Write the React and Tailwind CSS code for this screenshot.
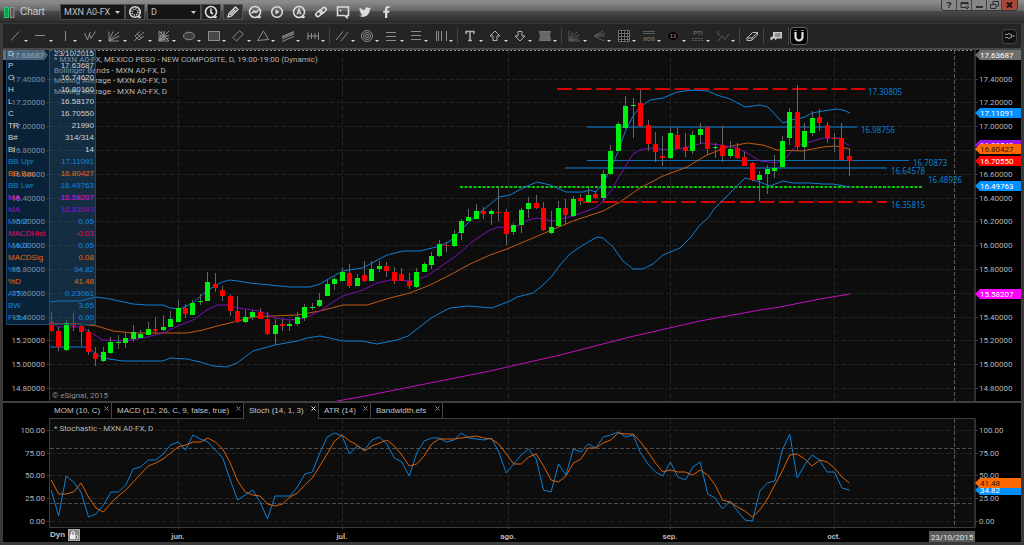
import React, { useState } from 'react';

const BLUE = '#0c7fd6';
const STEP = 7.46;
const barX = (i) => 51.2 + STEP * i;

// [high, bodyTop, bodyBottom, low, up]
const CANDLES = [
  [312, 322, 331, 332, 0], [327, 331, 347, 351, 0], [320, 323, 350, 351, 1], [313, 323, 326, 331, 0],
  [324, 326, 332, 346, 0], [329, 332, 352, 355, 0], [347, 353, 359, 366, 0], [347, 352, 361, 362, 1],
  [337, 342, 353, 354, 1], [335, 342, 343, 349, 1], [333, 338, 343, 348, 1], [325, 332, 339, 342, 1],
  [330, 334, 338, 338, 1], [322, 329, 335, 335, 1], [317, 329, 331, 334, 0], [315, 327, 330, 331, 1],
  [311, 319, 327, 327, 1], [300, 308, 322, 322, 1], [304, 308, 314, 318, 0], [300, 303, 315, 315, 1],
  [294, 301, 302, 305, 1], [272, 282, 301, 301, 1], [273, 284, 288, 292, 0], [286, 290, 296, 301, 0],
  [294, 296, 311, 316, 0], [296, 311, 322, 323, 0], [310, 317, 322, 323, 1], [310, 312, 317, 320, 1],
  [308, 312, 319, 319, 0], [312, 319, 334, 335, 0], [319, 325, 334, 345, 1], [319, 324, 326, 331, 0],
  [321, 324, 326, 331, 1], [312, 317, 324, 326, 1], [304, 307, 318, 321, 1], [303, 307, 308, 310, 1],
  [293, 300, 306, 307, 1], [279, 284, 296, 296, 1], [277, 279, 284, 290, 1], [267, 272, 281, 281, 1],
  [264, 273, 286, 288, 0], [274, 278, 286, 286, 1], [261, 275, 281, 282, 0], [261, 269, 281, 281, 1],
  [261, 266, 269, 272, 1], [262, 266, 271, 277, 0], [267, 272, 281, 284, 0], [268, 274, 281, 281, 0],
  [273, 281, 286, 289, 0], [268, 272, 287, 288, 1], [262, 264, 272, 272, 1], [252, 256, 265, 269, 1],
  [240, 244, 256, 257, 1], [242, 245, 246, 252, 0], [230, 234, 246, 247, 1], [219, 221, 233, 240, 1],
  [209, 217, 221, 221, 1], [204, 211, 219, 219, 1], [207, 211, 214, 219, 0], [209, 211, 214, 225, 1],
  [187, 212, 213, 221, 0], [209, 212, 234, 245, 0], [223, 225, 232, 235, 1], [208, 210, 225, 233, 1],
  [197, 203, 209, 218, 1], [195, 203, 208, 209, 0], [202, 208, 230, 231, 0], [211, 227, 233, 234, 1],
  [201, 208, 226, 227, 1], [199, 208, 215, 224, 0], [196, 199, 216, 217, 1], [194, 198, 201, 205, 0],
  [188, 195, 202, 203, 1], [191, 194, 198, 199, 0], [170, 174, 198, 201, 1], [145, 151, 174, 175, 1],
  [122, 124, 151, 151, 1], [96, 106, 128, 129, 1], [98, 105, 106, 138, 1], [90, 103, 126, 127, 0],
  [120, 125, 144, 151, 0], [132, 144, 152, 162, 0], [136, 156, 158, 166, 0], [127, 133, 158, 159, 1],
  [127, 135, 149, 149, 0], [133, 147, 151, 157, 0], [131, 135, 151, 154, 1], [123, 129, 135, 144, 1],
  [126, 127, 149, 155, 0], [143, 147, 148, 158, 1], [126, 145, 156, 162, 0], [141, 149, 156, 158, 1],
  [143, 148, 158, 159, 0], [152, 157, 166, 166, 0], [162, 163, 180, 181, 0], [171, 175, 180, 201, 1],
  [165, 169, 174, 194, 1], [155, 168, 171, 178, 1], [136, 141, 167, 168, 1], [108, 112, 138, 145, 1],
  [85, 112, 147, 150, 0], [123, 131, 147, 161, 1], [111, 118, 133, 136, 1], [109, 117, 123, 131, 0],
  [122, 125, 138, 143, 0], [133, 138, 139, 152, 0], [123, 138, 160, 160, 0], [149, 156, 161, 176, 0],
];

const BB_UPPER = '50,302 58,301 80,301 96,297 110,299 133,304 147,305 163,305 170,308 180,309 193,303 203,294 213,287 222,282 230,280 238,281 250,283 270,285 290,287 310,287 320,284 330,278 343,271 362,268 370,264 387,255 403,251 420,251 440,246 450,241 460,231 469,222 483,210 499,197 510,195 523,188 537,182 550,185 566,192 583,192 590,190 596,192 603,183 610,170 618,152 625,132 633,116 640,107 650,100 663,98 677,92 693,90 708,91 717,95 730,99 745,107 760,105 768,107 783,123 791,120 797,119 805,117 812,113 823,111 837,109 843,110 850,113';
const BB_LOWER = '50,347 88,347 95,353 103,358 123,361 163,361 170,358 187,359 200,362 213,366 227,367 237,363 253,351 275,345 297,341 307,338 320,336 343,341 362,341 377,344 397,340 408,336 417,329 430,319 440,313 450,308 468,306 492,308 510,301 517,297 533,293 543,285 552,276 560,265 570,254 583,245 597,237 603,238 613,247 623,261 633,269 643,269 653,264 663,255 680,248 690,238 700,225 708,218 715,208 730,193 745,178 757,181 770,186 783,181 793,183 810,183 823,184 833,184 850,187';
const BB_BASIS = '50,324 78,324 97,326 113,331 133,333 170,333 187,333 203,330 217,326 238,321 253,317 273,316 297,315 320,311 343,305 367,305 390,298 410,293 430,285 450,275 470,264 490,255 507,249 540,235 573,221 603,211 620,202 640,188 663,176 687,167 707,155 727,147 747,143 763,145 777,150 803,151 823,147 835,146 850,149';
const MA_FAST = '50,322 58,327 80,327 88,331 103,340 125,341 147,337 163,333 180,325 193,320 207,310 217,305 227,305 238,308 260,311 275,318 290,320 305,318 320,311 333,302 343,296 363,290 377,283 390,280 413,281 427,276 440,267 457,255 473,241 490,230 499,227 513,228 528,220 537,218 553,221 573,216 597,207 603,201 611,191 620,175 633,154 640,150 650,148 670,150 683,148 703,143 720,145 737,148 747,153 760,161 777,163 787,157 793,149 797,146 813,141 823,138 840,138 845,143 850,146';
const MA_SLOW = '337,401 360,397 390,391 430,383 490,371 560,355 630,337 700,321 760,310 780,307 820,299 850,294';

const STOCH_K = [
  490, 516, 476, 482, 492, 517, 514, 505, 492, 492, 485, 469, 467, 460, 460, 454, 445, 442, 450, 435,
  439, 442, 450, 458, 480, 500, 495, 490, 502, 519, 496, 496, 496, 487, 474, 472, 453, 437, 433, 436,
  454, 446, 450, 440, 437, 444, 458, 462, 476, 453, 441, 438, 438, 442, 440, 433, 438, 439, 440, 438,
  452, 473, 464, 455, 449, 459, 490, 492, 464, 475, 449, 452, 444, 448, 437, 435, 432, 437, 435, 453,
  464, 472, 476, 462, 477, 480, 467, 462, 494, 498, 509, 501, 511, 520, 521, 491, 483, 481, 450, 434,
  478, 465, 455, 460, 472, 472, 488, 490,
];
const STOCH_D = [
  480, 494, 494, 492, 483, 497, 508, 512, 503, 496, 490, 482, 474, 466, 463, 459, 453, 447, 445, 442,
  442, 438, 442, 449, 463, 481, 492, 495, 496, 504, 506, 504, 497, 493, 485, 478, 466, 454, 441, 435,
  441, 445, 451, 446, 443, 440, 446, 455, 466, 464, 456, 444, 439, 439, 439, 438, 437, 436, 438, 439,
  444, 454, 464, 464, 457, 454, 466, 480, 482, 476, 463, 459, 448, 448, 443, 440, 433, 434, 434, 442,
  452, 463, 472, 470, 472, 472, 475, 470, 475, 485, 500, 502, 507, 511, 517, 510, 499, 485, 471, 455,
  454, 459, 466, 460, 462, 468, 477, 483,
];
const toPoints = (ys) => ys.map((y, i) => `${barX(i)},${y}`).join(' ');

const MONTHS = [[178, 'jun.'], [342, 'jul.'], [508, 'ago.'], [670, 'sep.'], [834, 'oct.']];

const PRICES = Array.from({ length: 14 }, (_, i) => ({
  y: Math.round(78.5 + i * 23.8),
  label: (17.4 - i * 0.2).toFixed(5),
}));

const STOCH_TICKS = [[430, '100.00'], [453, '75.00'], [475, '50.00'], [498, '25.00'], [521, '0.00']];

const READOUT = [
  ['D', '23/10/2015', 'text-[#d0d0d0]'],
  ['P', '17.63687', 'text-[#d0d0d0]'],
  ['O', '16.74620', 'text-[#d0d0d0]'],
  ['H', '16.80160', 'text-[#d0d0d0]'],
  ['L', '16.58170', 'text-[#d0d0d0]'],
  ['C', '16.70550', 'text-[#d0d0d0]'],
  ['TR', '21990', 'text-[#d0d0d0]'],
  ['B#', '314/314', 'text-[#d0d0d0]'],
  ['BI', '14', 'text-[#d0d0d0]'],
  ['BB Upr', '17.11091', 'text-[#0c84e0]'],
  ['BB Bas', '16.80427', 'text-[#e8680c]'],
  ['BB Lwr', '16.49763', 'text-[#0c84e0]'],
  ['MA', '15.58207', 'text-[#e010e0]'],
  ['MA', '16.83543', 'text-[#8a10d8]'],
  ['MOM', '0.05', 'text-[#0c84e0]'],
  ['MACDHist', '-0.03', 'text-[#e0106c]'],
  ['MACD', '0.05', 'text-[#0c84e0]'],
  ['MACDSig', '0.08', 'text-[#e8680c]'],
  ['%K', '34.82', 'text-[#0c84e0]'],
  ['%D', '41.48', 'text-[#e8680c]'],
  ['ATR', '0.23061', 'text-[#0c84e0]'],
  ['BW', '3.65', 'text-[#0c84e0]'],
  ['Floor', '0.00', 'text-[#0c84e0]'],
];

const TABS = [
  ['MOM (10, C)', 'w-[63px]'],
  ['MACD (12, 26, C, 9, false, true)', 'w-[132px]'],
  ['Stoch (14, 1, 3)', 'w-[75px]'],
  ['ATR (14)', 'w-[52px]'],
  ['Bandwidth.efs', 'w-[72px]'],
];

const ICONS = {
  Line: <path d="M2 10.5L10 1.5" />,
  Horizontal: <path d="M1 5.5H11" />,
  Vertical: <path d="M6.5 1V11" />,
  Elliott: <path d="M.5 3L3.5 10L5.5 4L7 8.500L11.500 1.500M5.500 4L6.500 2" />,
  Fan: <path d="M1 1.500V11H11M1 11L5 1.500M1 11L11 2M1 11L11.500 6" />,
  Pitchfork: <path d="M1 11L11 2M2 6L7 1.500M6 10L11 6M2 6L6 10M4 3.500L8 8" />,
  Gann: <path d="M1 11L11 1M1 1L11 11M1 1.500V11H11M1 11L4 1M1 11L7 1M1 11L11 5M1 11L11 8M3 6H9M6 2V10" />,
  Ellipse: <ellipse cx="6" cy="6" rx="5.500" ry="3.800" fill="#3c3c3c" />,
  Rectangle: <rect x=".5" y="1.500" width="11" height="9" fill="#484848" />,
  Parallelogram: <path d="M.8 7.500L7.500.8L11.200 4L4.500 11Z" />,
  Triangle: <path d="M6.500 1L11.500 9.500L.5 10.500Z" />,
  Channel: <path d="M0 6.500L12 1.500M0 9L12 4M0 11.500L12 6.500M0 7.500L12 2.500" />,
  Cycles: <path d="M0 6H12M1 2.500V10M4.500 3V9M8 3V9M11.500 2.500V10" />,
  Parallels: <path d="M0 10L7 1.500M5 11L12 2" />,
  Circles: (
    <>
      <circle cx="6" cy="6" r="5.500" />
      <circle cx="6" cy="6" r="3.500" />
      <circle cx="6" cy="6" r="1.500" />
    </>
  ),
  Retracement: <path d="M1 2.500H11M1 6.500H11M1 10.500H11" />,
  Extension: <path d="M1 1.500H11M1 5.500H11M1 9.500H11" />,
  TimeZones: <path d="M1.500 1V11M3.500 1V11M6.500 1V11M11.500 1V11" />,
  Text: <path d="M2 4V1.500H10V4M6 1.500V10.500M4 10.500H8" strokeWidth="1.500" stroke="#b0b0b0" />,
  ArrowUp: <path d="M6 1L11 6H8V10.500H4V6H1Z" stroke="#b0b0b0" />,
  ArrowDown: <path d="M6 11L11 6H8V1.500H4V6H1Z" stroke="#b0b0b0" />,
  Flag: <path d="M.5 1.500H11.500L10.500 4.500L11.500 10.500H.5L1.500 6.500Z" fill="#686868" stroke="#747474" />,
  GannAngles: <path d="M1 1V11H12M1 11L5 2M1 11L9 2M1 11L11 5M1 11L11 8.500" stroke="#5c5c5c" />,
  Rays: <path d="M1 6H12M1 6L10 1M1 6L11 11M1 6L12 3.500" stroke="#5c5c5c" />,
  Grid: <path d="M.5.5H11.500V11.500H.5ZM3.500.5V11.500M6.500.5V11.500M9.500.5V11.500M.5 3.500H11.500M.5 6.500H11.500M.5 9.500H11.500" stroke="#707070" fill="#080808" />,
  Mob: (
    <>
      <path d="M0 1.500H12M0 3.500H12" stroke="#5c5c5c" />
      <text x="6" y="11" textAnchor="middle" fontSize="5" fontWeight="bold" fill="#6a6a6a" stroke="none">MOB</text>
    </>
  ),
  Ellipse13: (
    <>
      <ellipse cx="6" cy="6" rx="5.800" ry="4.500" fill="#000" stroke="#333" />
      <text x="6" y="8" textAnchor="middle" fontSize="6" fontWeight="bold" fill="#777" stroke="none">13</text>
    </>
  ),
  Pti: (
    <>
      <text x="6" y="5" textAnchor="middle" fontSize="6" fontWeight="bold" fill="#6a6a6a" stroke="none">PTI</text>
      <path d="M0 8.500H12M0 10.500H12" stroke="#5c5c5c" strokeDasharray="2 1" />
    </>
  ),
  Swing: <path d="M1 1V5H3M1 11L5 6L8 9.500L12 4" stroke="#5c5c5c" />,
};

const TOOL_GROUPS = [
  { className: 'w-[326px] pr-1', tools: ['Line', 'Horizontal', 'Vertical', 'Elliott', 'Fan', 'Pitchfork', 'Gann', 'Ellipse', 'Rectangle', 'Parallelogram', 'Triangle', 'Channel', 'Cycles'] },
  { className: 'w-[128px] pr-1 border-l border-[#444]', tools: ['Parallels', 'Circles', 'Retracement', 'Extension', 'TimeZones'] },
  { className: 'w-[104px] pr-1 border-l border-[#444]', tools: ['Text', 'ArrowUp', 'ArrowDown', 'Flag'] },
  { className: 'w-[178px] pr-1 border-l border-[#444]', tools: ['GannAngles', 'Rays', 'Grid', 'Mob', 'Ellipse13', 'Pti', 'Swing'] },
];

function ToolButton({ name }) {
  return (
    <button aria-label={name} className="relative flex-1 h-4 flex items-center justify-center">
      <svg viewBox="0 0 12 12" className="w-3 h-3" fill="none" stroke="#8c8c8c" strokeWidth="1">
        {ICONS[name]}
      </svg>
      <svg viewBox="0 0 4 2" className="absolute right-0 bottom-[2px] w-1 h-[2px]" fill="#ddd">
        <path d="M0 0H4L2 2Z" />
      </svg>
    </button>
  );
}

function Combo({ label, value, className }) {
  return (
    <label className={`relative h-4 bg-[#151515] border border-[#4c4c4c] ${className}`}>
      <select aria-label={label} defaultValue={value} className="appearance-none w-full h-full pl-[3px] font-[Roboto,sans-serif] text-[9px] leading-[14px] text-[#c0c0c0] bg-transparent block">
        <option>{value}</option>
      </select>
      <svg viewBox="0 0 5 3" className="absolute right-1 top-[6px] w-[5px] h-[3px] pointer-events-none" fill="#ccc">
        <path d="M0 0H5L2.500 3Z" />
      </svg>
    </label>
  );
}

function HeaderIcon({ label, className = '', children }) {
  return (
    <button aria-label={label} className={`h-4 flex items-center justify-center ${className}`}>
      <svg viewBox="0 0 14 14" className="w-[14px] h-[14px]" fill="none" stroke="#dcdcdc" strokeWidth="1.600">
        {children}
      </svg>
    </button>
  );
}

const Caret = () => <path d="M9.500 11.500H13.500L11.500 13.500Z" fill="#fff" stroke="none" />;

function TitleBar() {
  return (
    <header className="flex items-start justify-between h-6 pl-1 pr-[6px] bg-[linear-gradient(#8a8a8a,#8a8a8a_8%,#626262_50%,#4a4a4a_50%,#2c2c2c_95%)] border-b border-[#383838]">
      <div className="flex items-center pt-1">
        <svg viewBox="0 0 11 11" className="w-[11px] h-[11px]">
          <rect x=".5" y=".5" width="4" height="10" fill="#0ba048" stroke="#2fc070" />
          <rect x="6.500" y=".5" width="3.500" height="10" fill="#555" stroke="#8d8d8d" />
        </svg>
        <h1 className="ml-[5px] w-10 text-[10px] leading-4 text-[#d0d0d0]">Chart</h1>
        <Combo label="Symbol" value="MXN A0-FX" className="w-[65px]" />
        <HeaderIcon label="Symbol settings" className="w-5 bg-[#202020] border border-[#4c4c4c]">
          <circle cx="7" cy="7" r="5.300" />
          <circle cx="7" cy="7" r="3" strokeDasharray="1.200 1.150" strokeWidth="1.500" />
          <Caret />
        </HeaderIcon>
        <Combo label="Interval" value="D" className="w-[54px] ml-[2px]" />
        <HeaderIcon label="Time template" className="w-5 bg-[#202020] border border-[#4c4c4c]">
          <circle cx="7" cy="7" r="5.500" />
          <path d="M7 3.500V7.500L9 9" />
          <Caret />
        </HeaderIcon>
        <HeaderIcon label="Draw" className="w-5 ml-[2px] bg-[#303030] border border-[#555]">
          <path d="M2 12L3 8.500L9.500 2L12 4.500L5.500 11ZM4 10L9.500 4.500" strokeWidth="1.300" />
        </HeaderIcon>
        <HeaderIcon label="Studies" className="w-[22px] ml-px">
          <circle cx="7" cy="7" r="5.500" />
          <path d="M3.500 8.500L6 6L8 7.500L10.500 5" />
          <Caret />
        </HeaderIcon>
        <HeaderIcon label="Playback" className="w-[22px]">
          <circle cx="7" cy="7" r="5.300" />
          <path d="M5.500 4.500V9.500L9.500 7Z" fill="#dcdcdc" stroke="none" />
        </HeaderIcon>
        <HeaderIcon label="Alerts" className="w-[22px]">
          <circle cx="7" cy="7" r="5.500" />
          <path d="M5 9.500L7 4L9 9.500M5.700 8H8.300" strokeWidth="1.200" />
          <Caret />
        </HeaderIcon>
        <HeaderIcon label="Link" className="w-[22px]">
          <rect x="1.500" y="6.500" width="7" height="4" rx="2" transform="rotate(-42 5 8.500)" />
          <rect x="5.500" y="3.500" width="7" height="4" rx="2" transform="rotate(-42 9 5.500)" />
        </HeaderIcon>
        <HeaderIcon label="Comment" className="w-[22px]">
          <path d="M1.500 2H12.500V10.500H11V12.500L8.500 10.500H1.500Z" />
          <path d="M4.500 4.500V6.500" />
        </HeaderIcon>
        <HeaderIcon label="Twitter" className="w-[22px]">
          <path stroke="none" fill="#dcdcdc" d="M13 3.300c-.4.200-.9.300-1.400.4.500-.3.900-.8 1.100-1.300-.5.300-1 .5-1.600.6A2.500 2.500 0 0 0 6.900 5.200C4.800 5.100 3 4.100 1.800 2.600c-.7 1.200-.3 2.600.8 3.300-.4 0-.8-.1-1.100-.3 0 1.200.8 2.200 2 2.400-.4.100-.7.100-1.100 0 .3 1 1.200 1.700 2.300 1.700A5 5 0 0 1 1 10.800c4.800 3 10.900-.4 10.800-6.200.5-.4.900-.8 1.200-1.300Z" />
        </HeaderIcon>
        <HeaderIcon label="Facebook" className="w-[22px]">
          <path stroke="none" fill="#dcdcdc" d="M5 13V7.800H3.200V5.700H5V4.200C5 2.300 6.100 1 7.900 1h1.600v2.100H8.300c-.7 0-1 .3-1 1v1.600h2.200l-.3 2.100H7.300V13Z" />
        </HeaderIcon>
      </div>
      <div className="flex h-[11px] border border-t-0 border-[#383838] divide-x divide-[#444] rounded-b-sm overflow-hidden">
        <button aria-label="Help" className="w-[15px] bg-[#858585] text-[9px] leading-[10px] font-bold text-[#222]">?</button>
        <button aria-label="Dock" className="w-[15px] bg-[#858585] flex items-center justify-center">
          <svg viewBox="0 0 9 8" className="w-[9px] h-2" fill="none" stroke="#2c2c2c"><path d="M5 6.500H1V1.500H8V4M1 2.500H8M5 6H9L7 8Z" /></svg>
        </button>
        <button aria-label="Minimize" className="w-[15px] bg-[#858585] flex items-center justify-center">
          <svg viewBox="0 0 9 8" className="w-[9px] h-2" stroke="#2c2c2c" strokeWidth="2"><path d="M1 6H8" /></svg>
        </button>
        <button aria-label="Restore" className="w-[15px] bg-[#858585] flex items-center justify-center">
          <svg viewBox="0 0 9 8" className="w-[9px] h-2" fill="none" stroke="#2c2c2c"><path d="M3 3V.5H8.500V5H6.500M.5 3.500H6V7.500H.5Z" /></svg>
        </button>
        <button aria-label="Close" className="w-[15px] bg-[#a8483c] flex items-center justify-center">
          <svg viewBox="0 0 9 8" className="w-[9px] h-2" stroke="#2a1210" strokeWidth="2"><path d="M2 1.500L7 6.500M7 1.500L2 6.500" /></svg>
        </button>
      </div>
    </header>
  );
}

function Toolbar() {
  return (
    <div className="flex items-center h-6 pr-1 bg-[#242424]">
      {TOOL_GROUPS.map((g, i) => (
        <div key={i} className={`flex shrink-0 items-center ${g.className}`}>
          {g.tools.map((t) => <ToolButton key={t} name={t} />)}
        </div>
      ))}
      <button aria-label="Eraser" className="w-6 h-4 flex items-center justify-center border-l border-[#444]">
        <svg viewBox="0 0 12 12" className="w-3 h-3" fill="none" stroke="#bbb"><path d="M1 8L6.500 2.500H11.500L6 8ZM1 8V10.500H5.500L11.500 5V2.500M6 8V10" /></svg>
      </button>
      <button aria-label="Note" className="w-[25px] h-4 flex items-center justify-center border-l border-[#444]">
        <svg viewBox="0 0 12 12" className="w-3 h-3" fill="#c8c8c8"><path d="M3 2H12V8.500H7L5 10.500V8.500H3.500L1 10.500L0 8L3 6Z" /><path d="M5 4H10.500M5 6H10.500" stroke="#555" /></svg>
      </button>
      <div className="flex border-l border-[#444] pl-px">
        <button aria-label="Magnet" className="w-[18px] h-[18px] bg-black border border-[#666] rounded-sm flex items-center justify-center">
          <svg viewBox="0 0 12 12" className="w-3 h-3" fill="none" stroke="#e0e0e0" strokeWidth="2.200">
            <path d="M2.500 2V7A3.500 3.500 0 0 0 9.500 7V2" />
            <path d="M2.500 0V1M9.500 0V1" stroke="#aaa" />
          </svg>
        </button>
      </div>
      <button aria-label="Pin" className="ml-auto w-[15px] h-[15px] bg-[#101010] border border-[#444] rounded-sm flex items-center justify-center">
        <svg viewBox="0 0 10 6" className="w-[10px] h-[6px]" fill="none" stroke="#999"><path d="M0 1.500H3M0 4.500H3M3 .5L6.500 1.500V4.500L3 5.500M6.500 3H10" /></svg>
      </button>
    </div>
  );
}

function Tag({ y, color, textColor = '#fff', label }) {
  return (
    <g>
      <path d={`M975 ${y}L980 ${y - 5}H1021V${y + 5}H980Z`} fill={color} />
      <text x="980" y={y + 3} fill={textColor}>{label}</text>
    </g>
  );
}

function Level({ y, x1, x2, labelX, labelY, label, ...stroke }) {
  return (
    <g>
      <line x1={x1} x2={x2} y1={y} y2={y} {...stroke} />
      <text x={labelX} y={labelY} fill={BLUE} className="font-['Noto_Sans',sans-serif]">{label}</text>
    </g>
  );
}

function PriceChart() {
  return (
    <svg viewBox="3 50 1018 351" className="block w-full h-auto font-[Roboto,sans-serif] text-[8px]" fill="none" role="img" aria-label="Price chart">
      <rect x="3" y="50" width="1018" height="351" fill="#000" />
      <rect x="50" y="50" width="925" height="351" fill="#0d0d0d" />
      <g stroke="#232323" strokeDasharray="5 2" shapeRendering="crispEdges">
        {PRICES.map((p) => <line key={p.label} x1="50" x2="975" y1={p.y + 0.5} y2={p.y + 0.5} />)}
        {MONTHS.map(([x]) => <line key={x} x1={x + 0.5} x2={x + 0.5} y1="50" y2="401" />)}
      </g>
      <line x1="50" x2="975" y1="50.5" y2="50.5" stroke="#888" strokeDasharray="2 2" />
      <line x1="954.5" x2="954.5" y1="50" y2="401" stroke="#585858" strokeDasharray="4 2" />
      <g stroke="#3c3c3c" shapeRendering="crispEdges">
        <line x1="49.5" x2="49.5" y1="50" y2="401" />
        <line x1="975" x2="975" y1="50" y2="401" strokeWidth="2" stroke="#303030" />
        {PRICES.map((p) => <path key={p.label} d={`M47 ${p.y + 0.5}h3M975 ${p.y + 0.5}h3`} />)}
      </g>
      <g fill="#b4b4b4">
        {PRICES.map((p) => (
          <g key={p.label}>
            <text x="45" y={p.y + 3} textAnchor="end">{p.label}</text>
            <text x="979" y={p.y + 3}>{p.label}</text>
          </g>
        ))}
        <text x="54" y="62">* MXN A0-FX, MEXICO PESO - NEW COMPOSITE, D, 19:00-19:00 (Dynamic)</text>
        <text x="54" y="73">Bollinger Bands - MXN A0-FX, D</text>
        <text x="54" y="83">Moving Average - MXN A0-FX, D</text>
        <text x="54" y="94">Moving Average - MXN A0-FX, D</text>
        <text x="52" y="398" fill="#8c8c8c">© eSignal, 2015</text>
      </g>

      <Level y={127} x1={587} x2={857} labelX={861} labelY={133} label="16.98756" stroke="#0e5f9f" strokeWidth="1.500" />
      <Level y={160.500} x1={587} x2={909} labelX={913} labelY={166} label="16.70873" stroke="#0e6db8" />
      <Level y={168} x1={565} x2={887} labelX={891} labelY={174} label="16.64578" stroke="#0e5f9f" strokeWidth="1.500" />
      <Level y={187} x1={460} x2={922} labelX={928} labelY={183} label="16.48926" stroke="#06c406" strokeWidth="2" strokeDasharray="3 1.500" />
      <Level y={89} x1={557} x2={865} labelX={868} labelY={95} label="17.30805" stroke="#d80000" strokeWidth="2" strokeDasharray="15 4.600" />
      <Level y={202} x1={583} x2={887} labelX={891} labelY={208} label="16.35815" stroke="#d80000" strokeWidth="2" strokeDasharray="15 4.600" />

      <polyline points={BB_UPPER} stroke={BLUE} />
      <polyline points={BB_LOWER} stroke={BLUE} />
      <polyline points={BB_BASIS} stroke="#c45a10" />
      <polyline points={MA_FAST} stroke="#7a10b8" />
      <polyline points={MA_SLOW} stroke="#c010c0" />
      <g shapeRendering="crispEdges">
        {CANDLES.map(([hi, top, bottom, lo, up], i) => {
          const x = Math.round(barX(i) - 0.5);
          const left = Math.max(x - 2, 50);
          return (
            <g key={i}>
              <line x1={x + 0.5} x2={x + 0.5} y1={hi} y2={lo} stroke="#666" />
              <rect x={left} y={top} width={x + 3 - left} height={bottom - top} fill={up ? '#00f010' : '#f80000'} />
            </g>
          );
        })}
      </g>

      <Tag y={55} color="#6e6e6e" label="17.63687" />
      <path d="M3 50H44L48 55L44 60H3Z" fill="#6e6e6e" />
      <text x="44" y="58" textAnchor="end" fill="#ddd">17.63687</text>
      <Tag y={113} color="#0090ff" label="17.11091" />
      <Tag y={145} color="#9a10e8" label="16.83543" />
      <Tag y={149} color="#ff6a00" textColor="#2a1400" label="16.80427" />
      <Tag y={161} color="#ff0000" label="16.70550" />
      <Tag y={186} color="#0090ff" label="16.49763" />
      <Tag y={294} color="#ff00ff" label="15.58207" />
    </svg>
  );
}

function Readout() {
  return (
    <table className="absolute left-[3px] -top-[3px] w-[90px] border-collapse border border-[#174a6c] bg-[#1a548a]/40 text-[8px]">
      <tbody>
        {READOUT.map(([name, value, color], i) => (
          <tr key={i} className={`h-3 leading-3 ${color}`}>
            <th scope="row" className="w-[43px] p-0 pl-px text-left font-normal border-r border-[#2a4a68]">{name}</th>
            <td className="p-0 pr-px text-right bg-[#ffffff]/2">{value}</td>
          </tr>
        ))}
      </tbody>
    </table>
  );
}

function StudyTabs() {
  const [active, setActive] = useState(2);
  return (
    <div className="flex h-4 pl-[46px] bg-black">
      {TABS.map(([name, width], i) => (
        <div
          key={name}
          className={`flex shrink-0 items-start justify-between pl-[5px] pr-[2px] border-r border-[#444] ${width} ${active === i ? 'bg-[#0d0d0d]' : 'border-b'}`}
        >
          <button onClick={() => setActive(i)} className="text-[8px] leading-4 whitespace-nowrap text-[#c4c4c4]">{name}</button>
          <button aria-label={`Close ${name}`} className="pt-[3px]">
            <svg viewBox="0 0 5 5" className="w-[5px] h-[5px]" stroke={active === i ? '#ddd' : '#888'}><path d="M.5.5L4.500 4.500M4.500.5L.5 4.500" /></svg>
          </button>
        </div>
      ))}
      <div className="flex-1 border-b border-[#3c3c3c] mr-[46px]" />
    </div>
  );
}

function StochChart() {
  return (
    <div className="relative">
      <svg viewBox="3 419 1018 123" className="block w-full h-auto font-[Roboto,sans-serif] text-[8px]" fill="none" role="img" aria-label="Stochastic chart">
        <rect x="3" y="419" width="1018" height="123" fill="#000" />
        <rect x="50" y="419" width="925" height="108" fill="#0d0d0d" />
        <g stroke="#232323" strokeDasharray="5 2" shapeRendering="crispEdges">
          {STOCH_TICKS.map(([y]) => <line key={y} x1="50" x2="975" y1={y + 0.5} y2={y + 0.5} />)}
          {MONTHS.map(([x]) => <line key={x} x1={x + 0.5} x2={x + 0.5} y1="419" y2="527" />)}
        </g>
        <path d="M50 448.500H975M50 503.500H975" stroke="#4c4c4c" strokeDasharray="4 2" />
        <line x1="954.5" x2="954.5" y1="419" y2="527" stroke="#585858" strokeDasharray="4 2" />
        <g stroke="#3c3c3c" shapeRendering="crispEdges">
          <path d="M49.500 419V527.500H975" />
          <line x1="975" x2="975" y1="419" y2="528" strokeWidth="2" stroke="#303030" />
          {STOCH_TICKS.map(([y]) => <path key={y} d={`M47 ${y + 0.5}h3M975 ${y + 0.5}h3`} />)}
          {MONTHS.map(([x]) => <path key={x} d={`M${x + 0.5} 527v2`} />)}
        </g>
        <g fill="#b4b4b4">
          {STOCH_TICKS.map(([y, label]) => (
            <g key={y}>
              <text x="45" y={y + 3} textAnchor="end">{label}</text>
              <text x="979" y={y + 3}>{label}</text>
            </g>
          ))}
          <text x="54" y="431">* Stochastic - MXN A0-FX, D</text>
          {MONTHS.map(([x, label]) => <text key={x} x={x} y="539" textAnchor="middle" fontWeight="bold">{label}</text>)}
        </g>
        <svg x="50" y="419" width="925" height="108" viewBox="50 419 925 108">
          <polyline points={toPoints(STOCH_K)} stroke={BLUE} />
          <polyline points={toPoints(STOCH_D)} stroke="#d8620c" />
        </svg>
        <Tag y={490} color="#0090ff" label="34.82" />
        <Tag y={483} color="#ff6a00" textColor="#2a1400" label="41.48" />
        <rect x="929" y="531" width="46" height="11" fill="#5a5a5a" />
        <text x="952" y="540" textAnchor="middle" fill="#e4e4e4">23/10/2015</text>
      </svg>
      <div className="absolute left-[47px] bottom-px flex items-center gap-[3px]">
        <span className="text-[8px] leading-3 font-bold text-[#c4c4c4]">Dyn</span>
        <button aria-label="Lock time axis" className="w-3 h-3 bg-[#8a8a8a] border border-[#aaa] flex items-center justify-center">
          <svg viewBox="0 0 10 10" className="w-[10px] h-[10px]" fill="none" stroke="#eee">
            <path d="M2.500 5V3A1.500 1.500 0 0 1 5.500 3V5" />
            <rect x="1.500" y="5" width="4" height="3.500" fill="#eee" />
            <circle cx="7.500" cy="7" r="1.500" fill="#555" />
          </svg>
        </button>
      </div>
    </div>
  );
}

function App() {
  return (
    <div className="bg-[#3a3a3a] font-['Liberation_Sans',Arial,sans-serif]">
      <TitleBar />
      <div className="px-[3px] pb-[3px]">
        <Toolbar />
        <main className="border-t-2 border-[#484848]">
          <div className="relative overflow-hidden">
            <PriceChart />
            <Readout />
          </div>
          <div className="h-[2px] bg-[#404040]" />
          <StudyTabs />
          <StochChart />
        </main>
      </div>
    </div>
  );
}

export default App;
